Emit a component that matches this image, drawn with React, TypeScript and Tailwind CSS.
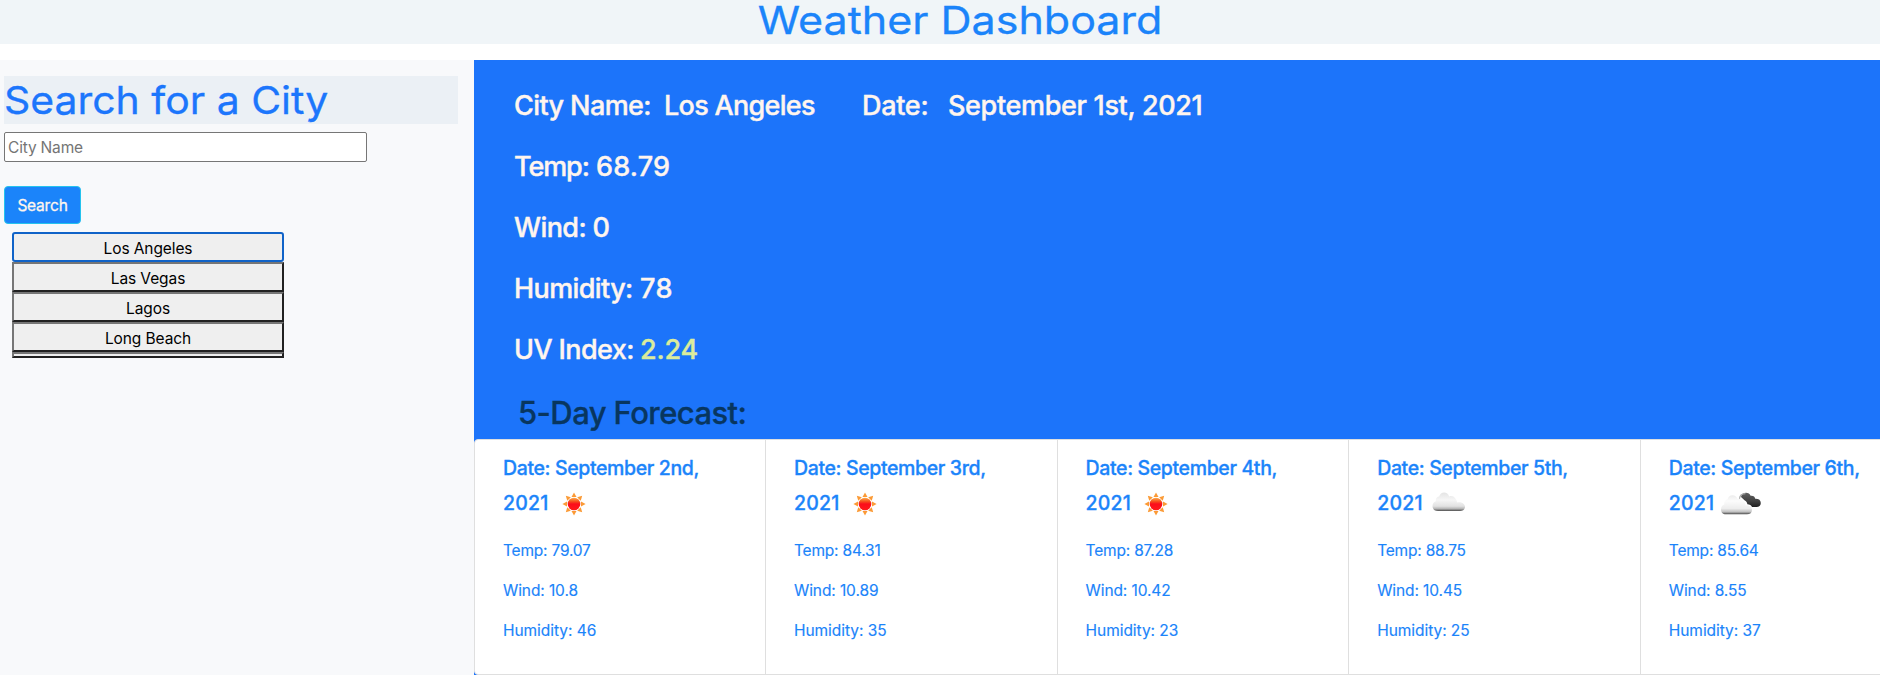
import React from "react";

type Sky = "sun" | "cloud" | "clouds";

const days: { date: string; sky: Sky; temp: string; wind: string; humidity: string }[] = [
  { date: "September 2nd,", sky: "sun", temp: "79.07", wind: "10.8", humidity: "46" },
  { date: "September 3rd,", sky: "sun", temp: "84.31", wind: "10.89", humidity: "35" },
  { date: "September 4th,", sky: "sun", temp: "87.28", wind: "10.42", humidity: "23" },
  { date: "September 5th,", sky: "cloud", temp: "88.75", wind: "10.45", humidity: "25" },
  { date: "September 6th,", sky: "clouds", temp: "85.64", wind: "8.55", humidity: "37" },
];

const cities = ["Las Vegas", "Lagos", "Long Beach"];

const CLOUD =
  "M6 19 C2.5 19 .5 17 .5 14.3 C.5 11.6 1.8 9.8 3.8 9.2 C3.5 6.4 5 4.8 7.2 4.6 C8 1.8 9.8 .6 12 .6 C14.6 .6 16.4 2 17.2 4.4 C19.4 3.6 22 4.2 23 6.2 C24.2 7.2 24.8 8.6 25.2 10.4 C29 9.6 33 11.4 33 14.8 C33 17.4 31 19 28 19 Z";

function SunIcon() {
  return (
    <svg width="24" height="24" viewBox="-12 -12 24 24" className="ml-[13px] mt-[1px] shrink-0">
      <defs>
        <linearGradient id="sun-core" x1="0" y1="0" x2="0" y2="1">
          <stop offset="0" stopColor="#ffb04a" />
          <stop offset=".3" stopColor="#f5501e" />
          <stop offset=".5" stopColor="#fb0d1b" />
          <stop offset="1" stopColor="#ff1a1a" />
        </linearGradient>
      </defs>
      {[0, 45, 90, 135, 180, 225, 270, 315].map((angle) => (
        <path key={angle} d="M-2.5 -7 L0 -11.6 L2.5 -7 Z" fill="#fb9a35" transform={`rotate(${angle})`} />
      ))}
      <circle r="6.3" fill="url(#sun-core)" />
    </svg>
  );
}

function CloudIcon() {
  return (
    <svg width="34" height="20" viewBox="0 0 34 20" className="ml-[9px] mt-[-4px] shrink-0">
      <defs>
        <linearGradient id="cloud-fill" x1="0" y1="0" x2="0" y2="1">
          <stop offset="0" stopColor="#e4e4e4" />
          <stop offset=".4" stopColor="#f6f6f6" />
          <stop offset=".74" stopColor="#e2e2e2" />
          <stop offset=".88" stopColor="#b4b4b4" />
          <stop offset="1" stopColor="#4c4c4c" />
        </linearGradient>
      </defs>
      <path d={CLOUD} fill="url(#cloud-fill)" />
    </svg>
  );
}

function CloudsIcon() {
  return (
    <svg width="42" height="23" viewBox="0 0 42 23" className="ml-[6px] mt-[-1px] shrink-0">
      <defs>
        <linearGradient id="front-cloud" x1="0" y1="0" x2="0" y2="1">
          <stop offset="0" stopColor="#ececec" />
          <stop offset=".3" stopColor="#fcfcfc" />
          <stop offset=".7" stopColor="#ededed" />
          <stop offset=".88" stopColor="#c0c0c0" />
          <stop offset="1" stopColor="#484848" />
        </linearGradient>
        <linearGradient id="back-cloud" x1="0" y1="0" x2="0" y2="1">
          <stop offset="0" stopColor="#626262" />
          <stop offset=".6" stopColor="#404040" />
          <stop offset="1" stopColor="#202020" />
        </linearGradient>
      </defs>
      <path
        d="M21 5 C21.4 2 23.6 .8 26 .8 C28.2 .8 30 2 30.6 3.8 C33.4 3.4 34.8 4.8 35.2 6.8 C38.6 6.6 40.8 8.2 40.8 11 C40.8 13.6 39 15 36.4 15 L32 15 C31.6 13.4 29.4 12.2 27.4 12.2 C27 10.4 26 9.2 24.8 8.6 Z"
        fill="url(#back-cloud)"
      />
      <path d="M19.4 7.4 C19.6 3.4 22 1.6 25.4 1.6" fill="none" stroke="#a8a8a8" strokeWidth="1.1" />
      <path
        d="M6 22.2 C2.6 22.2 1 20 1 17.4 C1 14.8 2.2 13 4.2 12.4 C4 9.6 5.2 7.6 7.6 7.2 C8.4 4.4 10 3.2 12.4 3.2 C15 3.2 16.8 4.6 17.6 7 C20.6 6 23.4 7.4 24.2 10 C25 11 25.4 12 25.6 13.4 C29.2 13 32 14.8 32 18 C32 20.8 30 22.2 27 22.2 Z"
        fill="url(#front-cloud)"
      />
    </svg>
  );
}

function SkyIcon({ sky }: { sky: Sky }) {
  if (sky === "sun") return <SunIcon />;
  if (sky === "cloud") return <CloudIcon />;
  return <CloudsIcon />;
}

export default function App() {
  return (
    <div className="h-[677px] w-full overflow-hidden bg-white font-['Inter',sans-serif] text-[15.5px] text-black">
      <header className="flex h-[44px] justify-center bg-[#f0f5f8] pl-[40px]">
        <h1 className="scale-x-[1.117] text-[38.5px] leading-[40px] whitespace-nowrap text-[#1b84fa] [-webkit-text-stroke:0.3px]">
          Weather Dashboard
        </h1>
      </header>

      <div className="mt-4 flex h-[615px]">
        <aside className="w-[474px] shrink-0 bg-[#f8f9fb] pt-4 pl-1">
          <h2 className="h-[48px] w-[454px] bg-[#ebf0f5] text-[38.5px] leading-[48px] text-[#1c76fc] [-webkit-text-stroke:0.3px]">
            <span className="inline-block origin-left scale-x-[1.063]">Search for a City</span>
          </h2>
          <input
            className="mt-2 block h-[30px] w-[363px] rounded-[2px] border border-[#767676] bg-white px-[3px] tracking-[-0.18px] placeholder:text-[#757575]"
            placeholder="City Name"
          />
          <button className="mt-6 block h-[38px] w-[77px] rounded-[4px] border border-[#24c3ee] bg-[#1b84fa] pt-px leading-[36px] tracking-[-0.2px] text-[#fff5ee] [-webkit-text-stroke:0.3px]">
            Search
          </button>
          <div className="mt-2 ml-2 flex w-[272px] flex-col tracking-[-0.1px]">
            <button className="h-[30px] rounded-[3px] border-2 border-[#1063c8] bg-[#efefef] pt-0.5 leading-[26px]">
              Los Angeles
            </button>
            {cities.map((city) => (
              <button
                key={city}
                className="h-[30px] border-2 border-t-[#767676] border-r-[#212121] border-b-[#212121] border-l-[#767676] bg-[#efefef] pt-0.5 leading-[26px]"
              >
                {city}
              </button>
            ))}
            <button className="h-[6px] border-2 border-t-[#767676] border-r-[#212121] border-b-[#212121] border-l-[#767676] bg-[#efefef]" />
          </div>
        </aside>

        <main className="min-w-0 flex-1 overflow-hidden bg-[#1c74fa]">
          <section className="pt-[15px] pl-[40px] text-[27px] leading-[61px] font-medium tracking-[-0.6px] whitespace-nowrap text-[#fff5ee] [-webkit-text-stroke:0.4px]">
            <div className="flex">
              <span className="w-[150px]">City Name:</span>
              <span className="w-[198px] tracking-[-0.7px]">Los Angeles</span>
              <span className="w-[86px] tracking-[-0.3px]">Date:</span>
              <span className="tracking-[-0.34px]">September 1st, 2021</span>
            </div>
            <div className="flex">
              <span className="w-[82px] tracking-[-1.1px]">Temp:</span>
              <span className="tracking-[0.2px]">68.79</span>
            </div>
            <div>Wind: 0</div>
            <div className="flex">
              <span className="w-[126px] tracking-[-0.6px]">Humidity:</span>
              <span className="tracking-[0.4px]">78</span>
            </div>
            <div className="flex">
              <span className="w-[126px]">UV Index:</span>
              <span className="tracking-[-0.18px] text-[#dbec9c]">2.24</span>
            </div>
          </section>
          <h3 className="mt-[14px] h-[45px] pl-[44px] text-[31px] leading-[38px] font-medium tracking-[-0.58px] text-[#08365f] [-webkit-text-stroke:0.3px]">
            5-Day Forecast:
          </h3>

          <div className="flex h-[236px] w-[1459px] overflow-hidden rounded-[4px] border border-[#dfdfdf] bg-white">
            {days.map((day) => (
              <article
                key={day.date}
                className="w-[291.6px] shrink-0 border-r border-[#dfdfdf] pt-[11px] pl-[28px] text-[#1b84fa] first:w-[291px] last:border-r-0"
              >
                <h4 className="text-[19.5px] leading-[35px] font-medium whitespace-nowrap [-webkit-text-stroke:0.3px]">
                  <div className="tracking-[-0.37px]">Date: {day.date}</div>
                  <div className="flex h-[35px] items-center tracking-[0.2px]">
                    2021
                    <SkyIcon sky={day.sky} />
                  </div>
                </h4>
                <div className="mt-[18px] flex flex-col gap-4 leading-6 tracking-[-0.1px] [-webkit-text-stroke:0.15px]">
                  <p className="tracking-[-0.2px]">Temp: {day.temp}</p>
                  <p>Wind: {day.wind}</p>
                  <p className="tracking-[-0.05px]">Humidity: {day.humidity}</p>
                </div>
              </article>
            ))}
          </div>
        </main>
      </div>
    </div>
  );
}
